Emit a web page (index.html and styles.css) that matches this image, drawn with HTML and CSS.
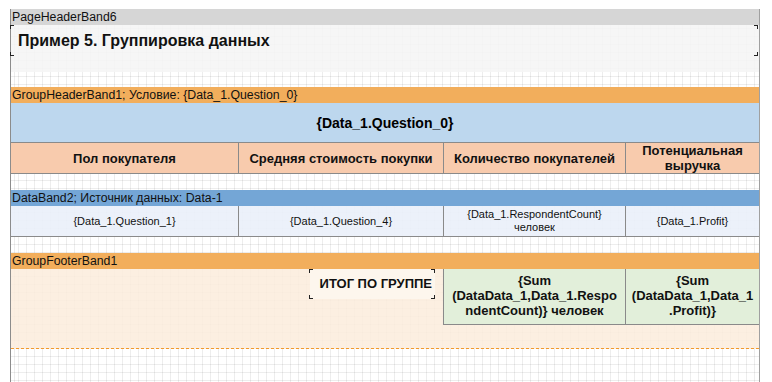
FILE: index.html
```html
<!DOCTYPE html>
<html lang="ru">
<head>
    <meta charset="UTF-8">
    <title>Report designer</title>
    <link rel="stylesheet" href="styles.css">
</head>
<body>

<div class="page">

    <!-- Page header -->
    <div class="band-title title-gray">PageHeaderBand6</div>
    <div class="band-body header-body">
        <div class="text-object report-title">
            Пример 5. Группировка данных
            <span class="corner tl"></span><span class="corner tr"></span>
            <span class="corner bl"></span><span class="corner br"></span>
        </div>
    </div>
    <div class="gap gap-15"></div>

    <!-- Group header -->
    <div class="band-title title-orange">GroupHeaderBand1; Условие: {Data_1.Question_0}</div>
    <div class="group-caption">{Data_1.Question_0}</div>
    <div class="row head-row">
        <div class="cell">Пол покупателя</div>
        <div class="cell">Средняя стоимость покупки</div>
        <div class="cell">Количество покупателей</div>
        <div class="cell">Потенциальная выручка</div>
    </div>
    <div class="gap"></div>

    <!-- Data band -->
    <div class="band-title title-blue">DataBand2; Источник данных: Data-1</div>
    <div class="row data-row">
        <div class="cell">{Data_1.Question_1}</div>
        <div class="cell">{Data_1.Question_4}</div>
        <div class="cell">{Data_1.RespondentCount}<br>человек</div>
        <div class="cell">{Data_1.Profit}</div>
    </div>
    <div class="gap"></div>

    <!-- Group footer -->
    <div class="band-title title-orange">GroupFooterBand1</div>
    <div class="footer-body">
        <div></div>
        <div class="total-label">
            ИТОГ ПО ГРУППЕ
            <span class="corner tl"></span><span class="corner tr"></span>
            <span class="corner bl"></span><span class="corner br"></span>
        </div>
        <div class="sum-cell">{Sum<br>(DataData_1,Data_1.Respo<br>ndentCount)} человек</div>
        <div class="sum-cell">{Sum<br>(DataData_1,Data_1<br>.Profit)}</div>
    </div>

</div>

</body>
</html>
```

FILE: styles.css
```css
body {
    margin: 0;
    font-family: "Liberation Sans", Arial, sans-serif;
    background-color: white;
    overflow: hidden;
}
.page {
    margin: 9px 0 0 10px;
    width: 748px;
    height: 373px;
    border-left: 1px solid #8c8c8c;
    border-right: 1px solid #a0a0a0;
    /* Raster des Designers */
    background-color: white;
    background-image:
        repeating-linear-gradient(to right, rgba(0, 0, 0, 0.07) 0 1px, transparent 1px 8px),
        repeating-linear-gradient(to bottom, rgba(0, 0, 0, 0.07) 0 1px, transparent 1px 8px);
    background-position: 7px 3px;
}
.band-title {
    height: 16px;
    line-height: 16px;
    font-size: 12.3px;
    padding-left: 1px;
    color: #111;
    white-space: nowrap;
}
.title-gray {
    background-color: #d6d6d6;
}
.title-orange {
    background-color: #f2ae5c;
}
.title-blue {
    background-color: #74a6d6;
}
.band-body {
    position: relative;
}
.header-body {
    height: 47px;
    background-color: rgba(245, 245, 245, 0.88);
}
.text-object {
    position: relative;
}
.report-title {
    height: 31px;
    margin-right: 1px;
    padding: 7px 0 0 7px;
    box-sizing: border-box;
    font-size: 16px;
    font-weight: bold;
    color: #111;
}
.corner {
    position: absolute;
    width: 3px;
    height: 3px;
    border-color: #222;
    border-style: solid;
    border-width: 0;
}
.corner.tl { left: -1px; top: 0; border-left-width: 1px; border-top-width: 1px; }
.corner.tr { right: 0; top: 0; border-right-width: 1px; border-top-width: 1px; }
.corner.bl { left: -1px; bottom: 0; border-left-width: 1px; border-bottom-width: 1px; }
.corner.br { right: 0; bottom: 0; border-right-width: 1px; border-bottom-width: 1px; }
.gap {
    height: 16px;
}
.gap-15 {
    height: 15px;
}
.group-caption {
    height: 40px;
    line-height: 40px;
    text-align: center;
    font-size: 14px;
    font-weight: bold;
    background-color: #bdd7ee;
    border-bottom: 1px solid #8a8a8a;
    box-sizing: border-box;
}
.row {
    display: grid;
    grid-template-columns: 227px 205px 182px 1fr;
    height: 31px;
    box-sizing: border-box;
    border-bottom: 1px solid #8a8a8a;
}
.cell {
    display: flex;
    align-items: center;
    justify-content: center;
    text-align: center;
    border-left: 1px solid #8a8a8a;
}
.cell:first-child {
    border-left: none;
}
.head-row {
    background-color: #f8cbad;
    font-size: 13px;
    font-weight: bold;
    line-height: 15px;
    color: #111;
}
.head-row .cell:last-child {
    padding: 0 6px;
}
.data-row {
    background-color: rgba(234, 240, 250, 0.9);
    font-size: 11px;
    line-height: 13px;
    color: #111;
}
.footer-body {
    display: grid;
    grid-template-columns: 227px 205px 182px 1fr;
    align-items: start;
    height: 80px;
    box-sizing: border-box;
    background-color: rgba(251, 236, 220, 0.85);
    border-bottom: 1px dashed #f29a2e;
}
.total-label {
    position: relative;
    justify-self: end;
    width: 125px;
    height: 30px;
    margin-right: 8px;
    box-sizing: border-box;
    padding-top: 7px;
    text-align: right;
    padding-right: 3px;
    font-size: 13px;
    font-weight: bold;
    color: #111;
    background-color: rgba(253, 246, 238, 0.92);
}
.sum-cell {
    height: 56px;
    box-sizing: border-box;
    padding-top: 4px;
    text-align: center;
    font-size: 13px;
    font-weight: bold;
    line-height: 15px;
    color: #111;
    background-color: #e2efda;
    border-left: 1px solid #8a8a8a;
    border-bottom: 1px solid #8a8a8a;
}
```
